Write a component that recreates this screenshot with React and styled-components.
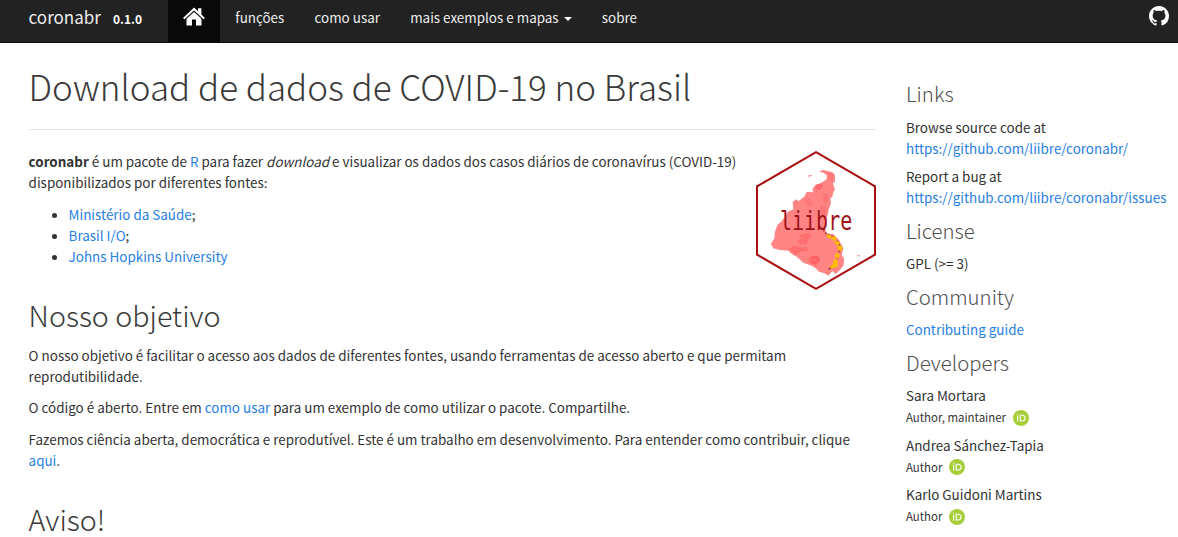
import React from "react";
import styled, { createGlobalStyle } from "styled-components";

const Global = createGlobalStyle`
  * { box-sizing: border-box; }
  html { overflow: hidden; }
  body {
    margin: 0;
    height: 537px;
    overflow: hidden;
    background: #fff;
    color: #333;
    font-family: "Source Sans Pro", "Noto Sans CJK JP", "Noto Sans", sans-serif;
    font-size: 13.43px;
    line-height: 21px;
  }
`;

const Navbar = styled.nav`
  display: flex;
  height: 43px;
  padding-left: 28.6px;
  background: #222;
  border-bottom: 1px solid #090909;
  color: #fff;
`;
const Brand = styled.a`
  width: 84.4px;
  color: #eee;
  font-size: 17px;
  line-height: 34px;
`;
const Version = styled.span`
  width: 55px;
  font-size: 12px;
  font-weight: 700;
  line-height: 38px;
`;
const NavItem = styled.a`
  display: flex;
  padding: 0 15.1px;
  height: 42px;
  color: #eee;
  line-height: 34px;
  white-space: nowrap;
  background: ${(p) => (p.$active ? "#090909" : "transparent")};
  svg { margin-top: 7px; }
`;
const Caret = styled.span`
  margin: 17px -0.6px 0 5.5px;
  width: 8px;
  height: 4px;
  border: 4px solid transparent;
  border-top-color: #fff;
  border-bottom: 0;
`;
const GithubLink = styled.a`
  margin: 6px 9px 0 auto;
  line-height: 0;
`;

const Page = styled.div`
  display: flex;
  gap: 30px;
  padding-left: 28.6px;
`;
const Main = styled.main`
  width: 847.4px;
  flex: none;
`;
const Title = styled.h1`
  margin: 0 0 21px;
  height: 87px;
  padding-top: 21px;
  border-bottom: 1px solid #e5e5e5;
  font-size: 35px;
  line-height: 43px;
  font-weight: 300;
  color: #3a3a3a;
  white-space: nowrap;
`;
const Logo = styled.svg`
  float: right;
  display: block;
  width: 120px;
  height: 139px;
`;
const Text = styled.p`
  margin: 0 0 10.5px;
`;
const List = styled.ul`
  margin: 0;
  padding-left: 40px;
`;
const Section = styled.h2`
  margin: 31px 0 14.3px;
  font-size: 28.7px;
  line-height: 33px;
  font-weight: 300;
  color: #3a3a3a;
`;
const Link = styled.a`
  color: #2780e3;
`;

const Sidebar = styled.aside`
  padding-top: 38px;
  white-space: nowrap;
`;
const SideTitle = styled.h2`
  margin: 0 0 9.8px;
  font-size: 20.35px;
  line-height: 25px;
  font-weight: 300;
  color: #505050;
  &:first-child { margin: 0.2px 0 10.6px; }
`;
const SideList = styled.ul`
  margin: 0 0 10.3px;
  padding: 0;
  list-style: none;
  display: grid;
  gap: ${(p) => p.$gap || 7}px;
`;
const Role = styled.small`
  display: flex;
  align-items: center;
  height: 22px;
  padding-top: 1px;
  font-size: 11.45px;
  svg { margin-left: 7px; }
`;

const HomeIcon = () => (
  <svg width="22" height="19" viewBox="0 0 22 19" fill="#fff">
    <path d="M11 0.5 L15 4.3 V1.2 H18.4 V7.5 L22 10.9 L20.6 12.2 L11 3.5 L1.4 12.2 L0 10.9 Z" />
    <path d="M11 5 L18.5 11.7 V18.5 H13 V12.5 H9 V18.5 H3.5 V11.7 Z" />
  </svg>
);

const GithubIcon = () => (
  <svg width="20" height="20" viewBox="0 0 16 16" fill="#fff">
    <path d="M8 0C3.58 0 0 3.58 0 8c0 3.54 2.29 6.53 5.47 7.59.4.07.55-.17.55-.38 0-.19-.01-.82-.01-1.49-2.01.37-2.53-.49-2.69-.94-.09-.23-.48-.94-.82-1.13-.28-.15-.68-.52-.01-.53.63-.01 1.08.58 1.23.82.72 1.21 1.87.87 2.33.66.07-.52.28-.87.51-1.07-1.78-.2-3.64-.89-3.64-3.95 0-.87.31-1.59.82-2.15-.08-.2-.36-1.02.08-2.12 0 0 .67-.21 2.2.82.64-.18 1.32-.27 2-.27s1.36.09 2 .27c1.53-1.04 2.2-.82 2.2-.82.44 1.1.16 1.92.08 2.12.51.56.82 1.27.82 2.15 0 3.07-1.87 3.75-3.65 3.95.29.25.54.73.54 1.48 0 1.07-.01 1.93-.01 2.2 0 .21.15.46.55.38A8.01 8.01 0 0 0 16 8c0-4.42-3.58-8-8-8z" />
  </svg>
);

const OrcidIcon = () => (
  <svg width="16" height="16" viewBox="0 0 16 16">
    <circle cx="8" cy="8" r="8" fill="#a6ce39" />
    <path d="M4.7 5.7V11.6M7.3 5.2H9.2A2.9 2.9 0 0 1 9.2 11H7.3Z" fill="none" stroke="#fff" strokeWidth="1.1" />
    <circle cx="4.7" cy="4.1" r=".7" fill="#fff" />
  </svg>
);

const LiibreLogo = () => (
  <Logo viewBox="0 0 120 139">
    <g transform="translate(-11 -11) scale(.33333)">
      <path
        d="M222 95 L235 90 L245 92 L262 97 L270 105 L270 125 L264 130 L270 150 L265 155 L262 170 L256 175 L258 190 L252 205 L248 225 L242 245 L240 265 L245 280 L265 283 L280 297 L290 315 L295 325 L290 345 L297 355 L296 375 L285 390 L272 402 L262 393 L250 407 L238 400 L222 395 L212 385 L200 377 L175 368 L155 350 L140 342 L130 332 L105 330 L85 325 L78 312 L88 295 L90 275 L97 255 L108 245 L120 230 L128 215 L145 208 L143 185 L155 178 L160 184 L178 170 L185 155 L205 157 L202 147 L212 135 L227 130 L245 118 L245 105 L235 98 Z"
        fill="#ff8484"
      />
      <path d="M186 108 L198 104 L202 107 L190 110 Z M334 346 L344 344 L345 350 Z" fill="#ff9696" />
      <g fill="#ff6a6a">
        <path d="M212 135 L228 130 L235 136 L226 150 L212 148 Z" />
        <path d="M180 172 L196 176 L204 190 L194 200 L178 190 Z" opacity=".45" />
        <path d="M235 165 L246 158 L250 175 L242 192 L234 185 Z" opacity=".6" />
        <path d="M225 198 L244 200 L240 232 L228 228 Z" opacity=".65" />
        <path d="M160 286 L190 280 L202 286 L190 300 L184 312 L166 314 L156 302 L170 296 Z" opacity=".8" />
        <path d="M132 325 L150 317 L172 323 L184 320 L190 330 L164 336 L150 346 Z" opacity=".85" />
        <path d="M190 355 L205 346 L222 350 L226 362 L212 376 L194 370 Z" />
        <path d="M248 100 L264 101 L264 115 L255 122 Z" opacity=".5" />
      </g>
      <path d="M203 354 L215 350 L221 361 L211 370 L200 365" fill="none" stroke="#f4555a" strokeWidth="3" />
      <path d="M232 266 L246 284 L262 289 L277 304 L288 326 L276 345 L278 361 L262 380 L248 390" fill="none" stroke="#b64542" strokeWidth="5" strokeDasharray="10 4 5 3" />
      <g fill="#fb0">
        <path d="M244 283 L258 286 L261 297 L248 293 Z" />
        <path d="M261 291 L273 289 L274 301 L263 302 Z" />
        <path d="M272 302 L285 307 L280 316 L267 310 Z" />
        <path d="M277 316 L292 319 L290 334 L279 330 Z" />
        <path d="M273 337 L285 344 L279 356 L269 351 Z" />
        <path d="M266 357 L279 360 L278 380 L260 385 L253 380 L264 372 Z" />
      </g>
    </g>
    <text x="24" y="58.5" transform="scale(1 1.35)" fill="#a01218" fontFamily='"DejaVu Sans Mono", monospace' fontSize="20">liibre</text>
    <path d="M60 1.2 L119 35.4 V103.6 L60 137.8 L1 103.6 V35.4 Z" fill="none" stroke="#aa0e10" strokeWidth="2" />
  </Logo>
);

const developers = [
  { name: "Sara Mortara", role: "Author, maintainer" },
  { name: "Andrea Sánchez-Tapia", role: "Author" },
  { name: "Karlo Guidoni Martins", role: "Author" },
];

export default function App() {
  return (
    <>
      <Global />
      <Navbar>
        <Brand>coronabr</Brand>
        <Version>0.1.0</Version>
        <NavItem $active><HomeIcon /></NavItem>
        <NavItem>funções</NavItem>
        <NavItem>como usar</NavItem>
        <NavItem>mais exemplos e mapas<Caret /></NavItem>
        <NavItem>sobre</NavItem>
        <GithubLink><GithubIcon /></GithubLink>
      </Navbar>
      <Page>
        <Main>
          <Title>Download de dados de COVID-19 no Brasil</Title>
          <LiibreLogo />
          <Text>
            <b>coronabr</b> é um pacote de <Link>R</Link> para fazer <em>download</em> e visualizar os dados dos casos diários de coronavírus (COVID-19) disponibilizados por diferentes fontes:
          </Text>
          <List>
            <li><Link>Ministério da Saúde</Link>;</li>
            <li><Link>Brasil I/O</Link>;</li>
            <li><Link>Johns Hopkins University</Link></li>
          </List>
          <Section>Nosso objetivo</Section>
          <Text>
            O nosso objetivo é facilitar o acesso aos dados de diferentes fontes, usando ferramentas de acesso aberto e que permitam reprodutibilidade.
          </Text>
          <Text>
            O código é aberto. Entre em <Link>como usar</Link> para um exemplo de como utilizar o pacote. Compartilhe.
          </Text>
          <Text>
            Fazemos ciência aberta, democrática e reprodutível. Este é um trabalho em desenvolvimento. Para entender como contribuir, clique <Link>aqui</Link>.
          </Text>
          <Section>Aviso!</Section>
        </Main>
        <Sidebar>
          <SideTitle>Links</SideTitle>
          <SideList>
            <li>Browse source code at<br /><Link>https://github.com/liibre/coronabr/</Link></li>
            <li>Report a bug at<br /><Link>https://github.com/liibre/coronabr/issues</Link></li>
          </SideList>
          <SideTitle>License</SideTitle>
          <SideList><li>GPL (&gt;= 3)</li></SideList>
          <SideTitle>Community</SideTitle>
          <SideList><li><Link>Contributing guide</Link></li></SideList>
          <SideTitle>Developers</SideTitle>
          <SideList $gap={6.5}>
            {developers.map((d) => (
              <li key={d.name}>{d.name}<Role>{d.role}<OrcidIcon /></Role></li>
            ))}
          </SideList>
        </Sidebar>
      </Page>
    </>
  );
}
